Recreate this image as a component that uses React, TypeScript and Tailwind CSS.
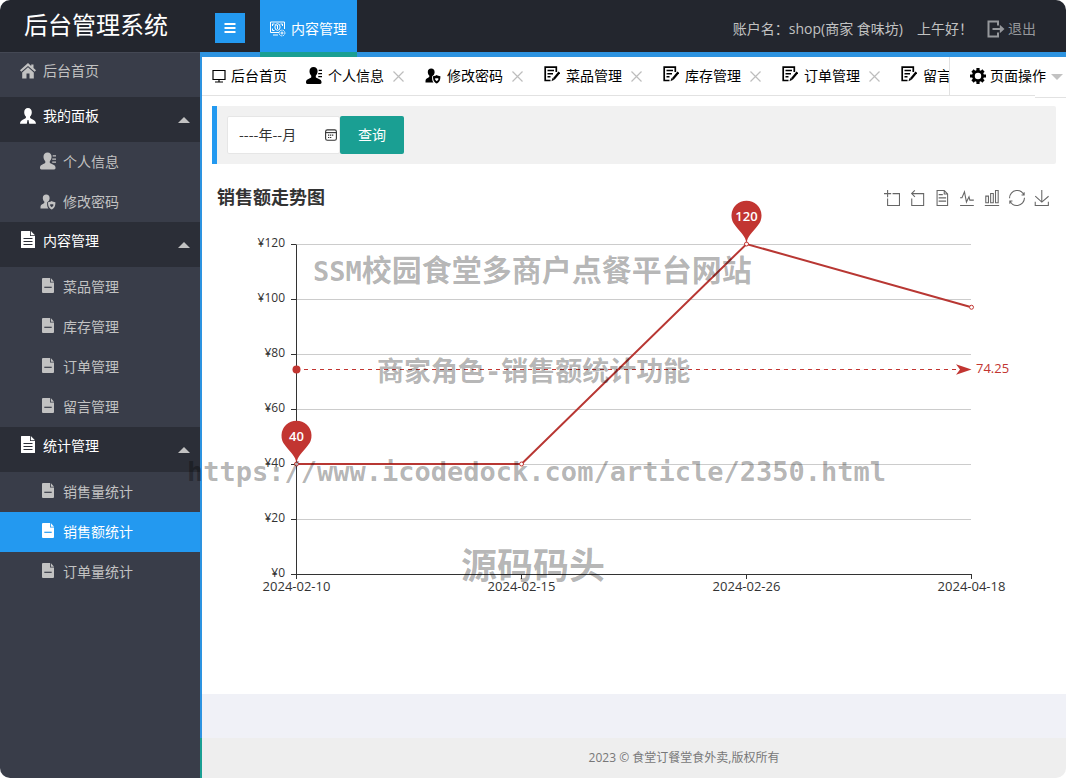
import React from "react";

type IconProps = { className?: string };

const HomeIcon = ({ className = "size-4" }: IconProps) => (
  <svg viewBox="0 0 16 16" className={className} fill="currentColor" aria-hidden="true">
    <path d="M8 0 0 7.200l1.300 1.600L8 2.900l6.700 5.900L16 7.200 13.500 5V1.600h-2.300v1.300z" />
    <path d="M8 4.300 2.200 9.500V15.500h4.300V10.500h3v5h4.300V9.500z" />
  </svg>
);

const UserIcon = ({ className = "size-4" }: IconProps) => (
  <svg viewBox="0 0 16 16" className={className} fill="currentColor" aria-hidden="true">
    <path d="M8 0C5.600 0 4.200 1.700 4.200 4.200c0 1.800.7 3.400 1.700 4.400v1.400C5.300 11 0 11.600 0 15.800h6.800L7.500 12h1l.7 3.800H16c0-4.200-5.300-4.800-5.900-5.800V8.600c1-1 1.700-2.600 1.700-4.400C11.800 1.700 10.400 0 8 0z" />
  </svg>
);

const ProfileIcon = ({ className = "size-4" }: IconProps) => (
  <svg viewBox="0 0 17 18" className={className} fill="currentColor" aria-hidden="true">
    <path d="M8 0C5.300 0 3.700 1.800 3.700 4.500c0 2 .8 3.700 1.900 4.700v1.600C5 12.200 0 12.300 0 16c0 1.500.5 2 1.500 2h13.500c1 0 1.500-.5 1.500-2 0-3.700-5.300-3.800-6.100-5.200V9.200c1.100-1 1.900-2.700 1.900-4.700C12.300 1.800 10.700 0 8 0z" />
    <path d="M13.500 3H17v1.300h-3.500zM13 6.300h4v1.300h-4zM13 9.600h4v1.300h-4z" />
  </svg>
);

const PasswordIcon = ({ className = "size-4" }: IconProps) => (
  <svg viewBox="0 0 16 16" className={className} fill="currentColor" aria-hidden="true">
    <path d="M6.200 0.500C4 .5 2.800 2 2.800 4c0 1.500.6 2.800 1.500 3.600v1.200C3.600 10 .5 10.200.5 13.200V14.500h8c-1.300-1.500-1.500-3.500-1.300-6.300l1.200-.9C9.200 6.500 9.600 5.300 9.600 4 9.600 2 8.400.5 6.200.5z" />
    <path fillRule="evenodd" d="M8 8.200c1.600 0 2.800-.5 3.700-1.100.9.600 2.100 1.100 3.700 1.100 0 3.700-.7 5.900-3.700 7.300C8.700 14.100 8 11.900 8 8.200zm2.200 2v1.500l1.500 1.500 1.600-1.500v-1.500z" />
  </svg>
);

const FileLinesIcon = ({ className = "size-4" }: IconProps) => (
  <svg viewBox="0 0 15 17" className={className} aria-hidden="true">
    <path fill="currentColor" d="M1 0h8.500v5h5v11.500a.5.5 0 0 1-.5.5H1a.5.5 0 0 1-.5-.5V.5A.5.5 0 0 1 1 0z" />
    <path fill="currentColor" d="M10.300 0l4.200 4.200h-4.200z" />
    <path stroke="#2b2e37" strokeWidth="1.200" d="M3 7.500h9M3 10.500h9M3 13.500h9" />
  </svg>
);

const FileIcon = ({ className = "size-4", line = "#393d49" }: IconProps & { line?: string }) => (
  <svg viewBox="0 0 12 15" className={className} aria-hidden="true">
    <path fill="currentColor" d="M1 0h7v4.500h4V14a1 1 0 0 1-1 1H1a1 1 0 0 1-1-1V1a1 1 0 0 1 1-1z" />
    <path fill="currentColor" d="M8.800 0 12 3.700H8.800z" />
    <path stroke={line} strokeWidth="1.200" d="M2.300 9.300h7.400" />
  </svg>
);

const MonitorIcon = ({ className = "size-4" }: IconProps) => (
  <svg viewBox="0 0 14 14" className={className} fill="none" stroke="currentColor" strokeWidth="1.200" aria-hidden="true">
    <path d="M1 1.500h12v9H1zM7 10.500v2.500M3 13h8" />
  </svg>
);

const EditIcon = ({ className = "size-4" }: IconProps) => (
  <svg viewBox="0 0 16 16" className={className} fill="none" stroke="currentColor" aria-hidden="true">
    <path strokeWidth="1.700" d="M12.300 6V1.200H1.200v13.300H6.500" />
    <path strokeWidth="1.500" d="M3.500 4.500h6.500M3.500 7.700h5.500M3.500 10.800h3" />
    <path strokeWidth="2.200" d="M15.300 6.300 9.800 13" />
    <path fill="currentColor" stroke="none" d="m8.500 12 2 1.800-3 1.400z" />
  </svg>
);

const GearIcon = ({ className = "size-4" }: IconProps) => (
  <svg viewBox="0 0 16 16" className={className} aria-hidden="true">
    <g stroke="currentColor" strokeWidth="3.200">
      <path d="M8 0v16M0 8h16M2.500 2.500l11 11M13.500 2.500l-11 11" />
    </g>
    <circle cx="8" cy="8" r="6" fill="currentColor" />
    <circle cx="8" cy="8" r="3.200" fill="#fff" />
  </svg>
);

const ContentIcon = ({ className = "size-4" }: IconProps) => (
  <svg viewBox="0 0 16 16" className={className} fill="none" stroke="currentColor" strokeWidth="1" aria-hidden="true">
    <path d="M9 11.500H.5V1h14v7M3 14h5" />
    <path d="M4.500 3H2.500v2M2.500 7.500v2h2M10.500 3h2v2" />
    <ellipse cx="7.500" cy="6" rx="2.600" ry="3.300" />
    <path d="M7.500 4v4M6.500 5l1-1" />
    <circle cx="12" cy="12" r="2.900" strokeDasharray="1.500 .8" />
    <circle cx="12" cy="12" r="1" />
  </svg>
);

const LogoutIcon = ({ className = "size-4" }: IconProps) => (
  <svg viewBox="0 0 18 18" className={className} fill="none" stroke="currentColor" strokeWidth="2" aria-hidden="true">
    <path d="M11 5.500V1.500H1.500v15H11v-4M5.500 9h9" />
    <path fill="currentColor" stroke="none" d="m12.800 4.700 4.700 4.300-4.700 4.300z" />
  </svg>
);

const CalendarIcon = ({ className = "size-3" }: IconProps) => (
  <svg viewBox="0 0 12 12" className={className} fill="none" stroke="currentColor" aria-hidden="true">
    <rect x=".6" y=".9" width="10.800" height="10.300" rx="1.800" strokeWidth="1.100" />
    <path d="M.6 3.600h10.800" strokeWidth="1.100" />
    <path d="M3 6.200h6M3 8.500h4" strokeWidth="1.200" strokeDasharray="1.300 .7" />
  </svg>
);

const CloseIcon = () => (
  <svg viewBox="0 0 13 13" className="size-[13px]" stroke="#bdbdbd" strokeWidth="1.200" aria-hidden="true">
    <path d="M1.500 1.500l10 10M11.500 1.500l-10 10" />
  </svg>
);

type Item = { label: string; kind: "profile" | "password" | "file"; active?: boolean };

const groups: { label: string; kind: "user" | "file"; items: Item[] }[] = [
  {
    label: "我的面板",
    kind: "user",
    items: [
      { label: "个人信息", kind: "profile" },
      { label: "修改密码", kind: "password" },
    ],
  },
  {
    label: "内容管理",
    kind: "file",
    items: [
      { label: "菜品管理", kind: "file" },
      { label: "库存管理", kind: "file" },
      { label: "订单管理", kind: "file" },
      { label: "留言管理", kind: "file" },
    ],
  },
  {
    label: "统计管理",
    kind: "file",
    items: [
      { label: "销售量统计", kind: "file" },
      { label: "销售额统计", kind: "file", active: true },
      { label: "订单量统计", kind: "file" },
    ],
  },
];

const tabs: { label: string; icon: React.ReactNode }[] = [
  { label: "个人信息", icon: <ProfileIcon className="mb-0.5 h-[17px] w-4" /> },
  { label: "修改密码", icon: <PasswordIcon className="size-4" /> },
  { label: "菜品管理", icon: <EditIcon className="mb-1 size-4" /> },
  { label: "库存管理", icon: <EditIcon className="mb-1 size-4" /> },
  { label: "订单管理", icon: <EditIcon className="mb-1 size-4" /> },
  { label: "留言管理", icon: <EditIcon className="mb-1 size-4" /> },
];

const tools: { label: string; d: string }[] = [
  { label: "区域缩放", d: "M0,13.5h26.9 M13.5,26.9V0 M32.1,13.5H58V58H13.5 V32.1" },
  { label: "区域缩放还原", d: "M22,1.4L9.9,13.5l12.3,12.3 M10.3,13.5H54.9v44.6 H10.3v-26" },
  { label: "数据视图", d: "M17.5,17.3H33 M45.4,29.5h-28 M11.5,2v56H51V14.8L38.4,2H11.5z M38.4,2.2v12.7H51 M45.4,41.7h-28" },
  { label: "切换为折线图", d: "M4.1,28.9h7.1l9.3-22l7.4,38l9.7-19.7l3,12.8h14.9M4.1,58h51.4" },
  { label: "切换为柱状图", d: "M6.7,22.9h10V48h-10V22.9zM24.9,13h10v35h-10V13zM43.2,2h10v46h-10V2zM3.1,58h53.7" },
  { label: "还原", d: "M47,18.9h9.8V8.7 M56.3,20.1 C52.1,9,40.5,0.6,26.8,2.1C12.6,3.7,1.6,16.2,2.1,30.6 M13,41.1H3.1v10.2 M3.7,39.9c4.2,11.1,15.8,19.5,29.5,18 c14.2-1.6,25.2-14.1,24.7-28.5" },
  { label: "保存为图片", d: "M4.7,22.9L29.3,45.5L54.7,23.4M4.6,43.6L4.6,58L53.8,58L53.8,43.6M29.2,45.1L29.2,0" },
];

const sales = [
  { date: "2024-02-10", value: 40 },
  { date: "2024-02-15", value: 40 },
  { date: "2024-02-26", value: 120 },
  { date: "2024-04-18", value: 97 },
];
const average = 74.25;
const px = (i: number) => 94.5 + i * 225;
const py = (v: number) => 344.5 - v * 2.75;

function Pin({ x, y, value }: { x: number; y: number; value: number }) {
  return (
    <g transform={`translate(${x} ${y})`}>
      <path d="M0 0C-1-8-6-11-11.300-18A15 15 0 1 1 11.300-18C6-11 1-8 0 0Z" fill="#c23531" />
      <text x="0" y="-23" textAnchor="middle" fill="#fff" fontSize="13" fontWeight="600">{value}</text>
    </g>
  );
}

function SalesChart() {
  return (
    <svg viewBox="0 0 864 400" className="block h-auto w-full overflow-visible" role="img" aria-label="销售额走势图">
      {[0, 20, 40, 60, 80, 100, 120].map((v) => (
        <g key={v}>
          <path d={`M94 ${py(v)}H769`} stroke="#ccc" />
          <path d={`M89 ${py(v)}H94`} stroke="#333" />
          <text x="83" y={py(v) + 2} textAnchor="end" fontSize="12" fill="#333">¥{v}</text>
        </g>
      ))}
      <path d={`M94.500 ${py(120)}V${py(0)}H769.500`} fill="none" stroke="#333" />
      {sales.map((s, i) => (
        <g key={s.date}>
          <path d={`M${px(i)} 344V349`} stroke="#333" />
          <text x={px(i)} y="361" textAnchor="middle" fontSize="13" fill="#333">{s.date}</text>
        </g>
      ))}
      <polyline
        points={sales.map((s, i) => `${px(i)},${py(s.value) - 0.5}`).join(" ")}
        fill="none"
        stroke="#b83733"
        strokeWidth="2"
      />
      {sales.map((s, i) => (
        <circle key={s.date} cx={px(i)} cy={py(s.value) - 0.5} r="2" fill="#fff" stroke="#c23531" />
      ))}
      <path d="M94 139.500H760" stroke="#c23531" strokeDasharray="4 4" />
      <circle cx="94.500" cy="139.500" r="4" fill="#c23531" />
      <path transform="translate(769.5 139.5)" d="M0 0-15.500-5.300-11.500 0-15.500 5.300Z" fill="#c23531" />
      <text x="774" y="143" fontSize="13" fill="#c23531">{average}</text>
      <Pin x={px(0)} y={py(40) - 1} value={40} />
      <Pin x={px(2)} y={py(120) - 1} value={120} />
    </svg>
  );
}

function Sidebar() {
  return (
    <nav className="w-[200px] shrink-0 bg-[#393d49] text-sm text-[#c2c2c2]">
      <a href="#home" className="flex h-[45px] items-center gap-[7px] border-t border-[#444854] px-5 pb-2">
        <HomeIcon className="size-4" />
        后台首页
      </a>
      {groups.map((g) => (
        <div key={g.label}>
          <button type="button" className="flex h-[45px] w-full items-center gap-[7px] bg-[#2b2e37] pr-2.5 pb-2 pl-5 text-white">
            {g.kind === "user" ? <UserIcon className="size-4" /> : <FileLinesIcon className="mb-0.5 h-[17px] w-4" />}
            {g.label}
            <span className="mt-2 ml-auto border-x-6 border-b-6 border-x-transparent border-b-[#c2c2c2]" />
          </button>
          <ul>
            {g.items.map((it) => (
              <li key={it.label}>
                <a
                  href={`#${it.label}`}
                  className={
                    it.active
                      ? "flex h-10 items-center gap-[7px] bg-[#2399f0] pl-10 text-white"
                      : "flex h-10 items-center gap-[7px] pl-10"
                  }
                >
                  {it.kind === "profile" && <ProfileIcon className="mb-0.5 h-[18px] w-4" />}
                  {it.kind === "password" && <PasswordIcon className="size-4" />}
                  {it.kind === "file" && (
                    <FileIcon className="mb-[3px] h-[15px] w-4" line={it.active ? "#2399f0" : "#393d49"} />
                  )}
                  {it.label}
                </a>
              </li>
            ))}
          </ul>
        </div>
      ))}
    </nav>
  );
}

function TabBar() {
  return (
    <div className="flex h-[39px] text-sm text-black">
      <div className="flex min-w-0 flex-1 overflow-hidden border-b border-[#e2e2e2]">
        <button type="button" className="flex shrink-0 items-center gap-[5px] pr-[9px] pl-2.5">
          <MonitorIcon className="size-3.5" />
          后台首页
        </button>
        {tabs.map((t) => (
          <div key={t.label} className="flex shrink-0 items-center gap-2 px-2.5">
            <button type="button" className="flex items-center gap-1.5">
              {t.icon}
              {t.label}
            </button>
            <button type="button" aria-label={`关闭${t.label}`}>
              <CloseIcon />
            </button>
          </div>
        ))}
      </div>
      <button type="button" className="flex shrink-0 items-start border-l border-[#e2e2e2]">
        <span className="flex h-[39px] w-[85px] items-center gap-1 border-b border-[#e2e2e2] pl-5 whitespace-nowrap">
          <GearIcon className="size-4 shrink-0" />
          <span className="shrink-0">页面操作</span>
        </span>
        <span className="flex h-[41px] w-[31px] items-center justify-end border-b border-[#e2e2e2] pr-[3px]">
          <span className="border-x-6 border-t-6 border-x-transparent border-t-[#c2c2c2]" />
        </span>
      </button>
    </div>
  );
}

function Watermarks() {
  return (
    <div
      aria-hidden="true"
      className="pointer-events-none absolute inset-0 font-['DejaVu_Sans_Mono','Noto_Sans_CJK_SC',monospace] font-bold whitespace-nowrap text-black/30"
    >
      <span className="absolute top-[251px] left-[313px] text-[30px] leading-10">
        <span className="text-[27px]">SSM</span>校园食堂多商户点餐平台网站
      </span>
      <span className="absolute top-[352px] left-[377px] text-[27px] leading-10">商家角色-销售额统计功能</span>
      <span className="absolute top-[452px] left-[187px] text-[27px] leading-10">
        https://www.icodedock.com/article/2350.html
      </span>
      <span className="absolute top-[547px] left-[461px] text-[36px] leading-10">源码码头</span>
    </div>
  );
}

export default function App() {
  return (
    <div className="relative flex min-h-screen flex-col overflow-hidden rounded-[10px] bg-white font-['Open_Sans','Noto_Sans_CJK_SC',sans-serif]">
      <header className="flex h-[52px] shrink-0 items-center bg-[#23262e]">
        <h1 className="w-[215px] pb-0.5 pl-6 text-2xl text-white">后台管理系统</h1>
        <button
          type="button"
          aria-label="折叠菜单"
          className="mt-1 flex size-[30px] items-center justify-center bg-[#2399f0] text-white"
        >
          <svg viewBox="0 0 12 10" className="h-2.5 w-3" stroke="currentColor" strokeWidth="2" aria-hidden="true">
            <path d="M.5 1h11M.5 5h11M.5 9h11" />
          </svg>
        </button>
        <a
          href="#content"
          className="relative ml-[15px] flex h-full items-center gap-[5px] bg-[#2399f0] px-2.5 pt-1.5 text-sm text-white"
        >
          <ContentIcon className="size-4" />
          内容管理
          <span className="absolute inset-x-0 top-full h-[5px] bg-[#1a9f93]" />
        </a>
        <div className="ml-auto flex items-center pt-1.5 pr-[30px] text-sm text-[#c2c2c2]">
          <span>账户名：shop(商家 食味坊)</span>
          <span className="ml-3.5">上午好！</span>
          <a href="#logout" className="ml-3.5 flex items-center gap-[3px] text-[#96989c]">
            <LogoutIcon className="size-[18px]" />
            退出
          </a>
        </div>
      </header>

      <div className="flex flex-1">
        <Sidebar />
        <div className="flex min-w-0 flex-1 flex-col">
          <div className="h-[5px] bg-[#2d93e0]" />
          <div className="flex flex-1 flex-col border-l-2 border-[#2d93e0]">
            <TabBar />
            <main className="flex-1">
              <form
                className="mx-2.5 mt-2.5 flex h-[58px] items-center rounded-r-xs border-l-[5px] border-[#2399f0] bg-[#f1f1f1] pl-2.5"
                onSubmit={(e) => e.preventDefault()}
              >
                <div className="relative">
                  <input
                    type="text"
                    aria-label="年月"
                    defaultValue="----年--月"
                    className="block h-[38px] w-[113px] rounded-xs border border-[#e6e6e6] bg-white pb-0.5 pl-[11px] font-['Noto_Sans_CJK_SC',sans-serif] text-sm text-[#333]"
                  />
                  <span className="pointer-events-none absolute inset-y-0 right-[3px] flex items-center text-[#333]">
                    <CalendarIcon className="size-3" />
                  </span>
                </div>
                <button type="submit" className="h-[38px] rounded-xs bg-[#1a9f93] px-[18px] text-sm text-white">
                  查询
                </button>
              </form>
              <div className="flex h-[66px] items-center justify-between pr-4 pl-[15px]">
                <h2 className="text-lg font-bold text-[#333]">销售额走势图</h2>
                <div className="flex gap-[9px] pt-0.5">
                  {tools.map((t) => (
                    <button key={t.label} type="button" aria-label={t.label}>
                      <svg viewBox="0 0 60 60" className="size-4 overflow-visible" fill="none" stroke="#666" strokeWidth="4" aria-hidden="true">
                        <path d={t.d} />
                      </svg>
                    </button>
                  ))}
                </div>
              </div>
              <SalesChart />
            </main>
            <div className="h-11 bg-[#f0f1f7]" />
          </div>
          <footer className="flex h-10 items-center justify-center border-l-2 border-[#1a9f93] bg-[#eee] pl-[100px] text-xs text-[#777]">
            2023 © 食堂订餐堂食外卖,版权所有
          </footer>
        </div>
      </div>
      <Watermarks />
    </div>
  );
}
